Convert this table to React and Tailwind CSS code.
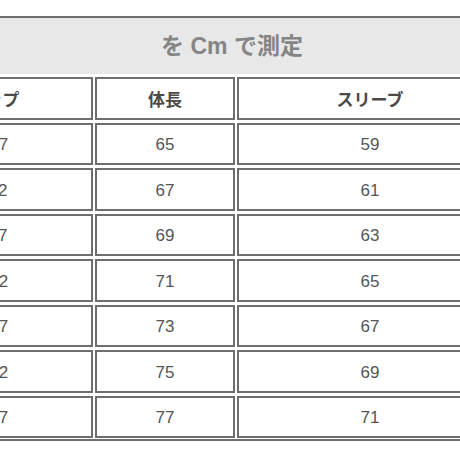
import React from "react";

const rows = [
  ["107", "65", "59"],
  ["112", "67", "61"],
  ["117", "69", "63"],
  ["122", "71", "65"],
  ["127", "73", "67"],
  ["132", "75", "69"],
  ["137", "77", "71"],
];

function Cell({ children, bold }) {
  return (
    <div
      className={
        "h-[42.5px] border-2 border-[#6e6e6e] flex items-center justify-center " +
        (bold
          ? "text-[17px] font-bold text-[#4a4a4a] pt-[4px]"
          : "text-[17px] text-[#555555] pt-[2px]")
      }
    >
      {children}
    </div>
  );
}

function Row({ cells, bold }) {
  return (
    <div className="grid grid-cols-[198px_140px_266px] gap-x-[2px]">
      {cells.map((c, i) => (
        <Cell key={i} bold={bold}>
          {c}
        </Cell>
      ))}
    </div>
  );
}

export default function App() {
  return (
    <div
      className="w-[460px] h-[460px] overflow-hidden bg-white pt-[16px]"
      style={{ fontFamily: '"Liberation Sans", "Noto Sans CJK JP", sans-serif' }}
    >
      <div className="ml-[-105px] w-[608px] border-b-2 border-[#6e6e6e] pb-[1px]">
        <div className="h-[58px] border-t-2 border-[#6e6e6e] bg-[#e8e8e8] flex items-center justify-center pl-[66px] text-[23px] font-bold text-[#858585]">
          を Cm で測定
        </div>
        <div className="mt-[3px] flex flex-col gap-y-[3px]">
          <Row cells={["ラップ", "体長", "スリーブ"]} bold />
          {rows.map((r, i) => (
            <Row key={i} cells={r} />
          ))}
        </div>
      </div>
    </div>
  );
}
